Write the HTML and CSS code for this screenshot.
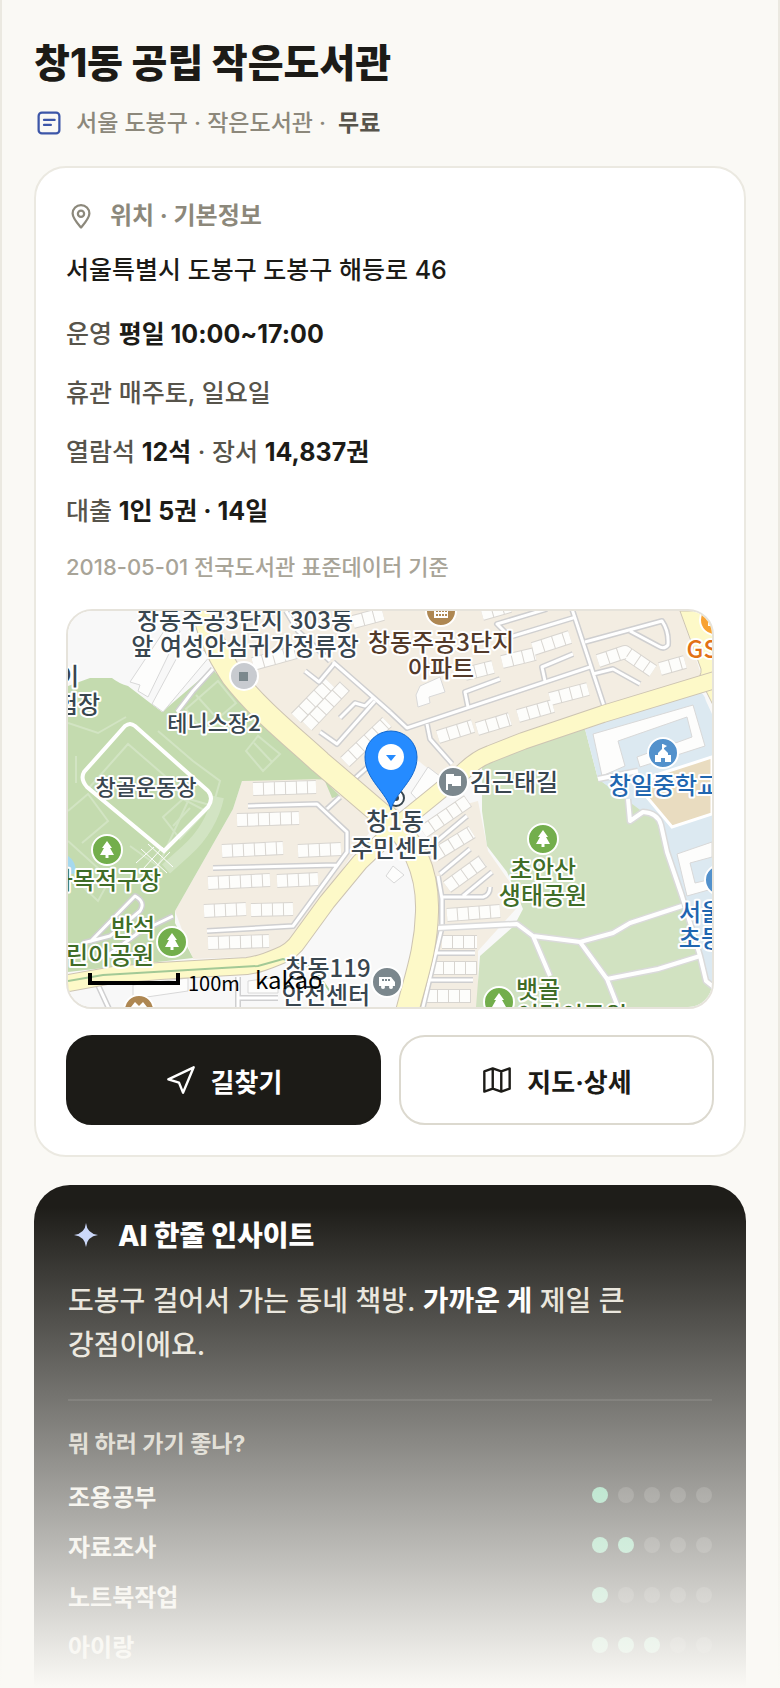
FILE: index.html
```
<!DOCTYPE html>
<html lang="ko">

<head>
    <meta charset="UTF-8">
    <meta name="viewport" content="width=device-width, initial-scale=1.0">
    <title>창1동 공립 작은도서관</title>
    <link rel="stylesheet" href="styles.css">
</head>

<body>
    <main class="page">
        <header class="place-header">
            <h1 class="title">창1동 공립 작은도서관</h1>
            <p class="meta">
                <svg class="icon icon-doc" viewBox="0 0 24 24" aria-hidden="true">
                    <rect x="3.7" y="3.7" width="16.6" height="16.6" rx="2.6" />
                    <path d="M8 9.5h8.5M8 13.5h5.5" />
                </svg>
                <span>서울 도봉구 · 작은도서관 ·</span>
                <strong class="free">무료</strong>
            </p>
        </header>

        <section class="card">
            <h2 class="card-title">
                <svg class="icon" viewBox="0 0 24 24" aria-hidden="true">
                    <path d="M12 21.2c-3.6-4.2-6.7-7.6-6.7-11.2a6.7 6.7 0 0 1 13.4 0c0 3.6-3.1 7-6.7 11.2z" />
                    <circle cx="12" cy="10.2" r="2.5" />
                </svg>
                <span>위치 · 기본정보</span>
            </h2>
            <p class="address">서울특별시 도봉구 도봉구 해등로 46</p>
            <ul class="info">
                <li>운영 <b>평일 10:00~17:00</b></li>
                <li>휴관 매주토, 일요일</li>
                <li>열람석 <b>12석</b> · 장서 <b>14,837권</b></li>
                <li>대출 <b>1인 5권 · 14일</b></li>
            </ul>
            <p class="source">2018-05-01 전국도서관 표준데이터 기준</p>

            <div class="map">
                <svg class="map-canvas" viewBox="0 0 644 396" preserveAspectRatio="xMidYMid slice" role="img" aria-label="창1동 주민센터 주변 지도">
                    <defs>
                        <g id="roads">
                            <path d="M322 101L339 117L522 56M265 51L322 101M504-2L537 98M517 31L594 10Q601 20 600 34Q596 39 590 35L562 20M525 63L545 58L572 73" />
                            <path d="M508 6L442 26L429 13L479 -2M477 70L474 56L505 43M400 96L397 81L432 68M359 113L362 128L384 153" />
                            <path d="M237 60L251 71L266 53M272 107L287 92L297 95L305 87M252 121L269 133L307 90M284 170L322 136M218 0L230 20L262 50" />
                            <path d="M180 195L249 193L279 221V241L225 315L139 320M145 257L269 254M259 198L272 186M145 58L125 80L109 101" />
                            <path d="M22 331L67 285Q78 291 72 300L42 325L15 332M105 305L70 322L35 348" />
                            <path d="M370 265L374 288V316L355 396M374 286L415 286Q422 284 422 276M372 263L402 238M368 231L399 205M395 285L424 261M365 342H407M359 369H405" />
                            <path d="M30 374L42 400M170 366V400M170 387H210" />
                        </g>
                        <g id="paths">
                            <path d="M369 317L449 313L465 325L512 331L545 322L562 312L614 295M465 325L482 365M512 331L539 368L550 396M539 368L590 358L632 345" />
                            <path d="M560 188L562 210L575 201Q590 202 593 214L599 241L614 285L632 345L638 370L648 378M530 168L570 160" />
                        </g>
                        <g id="houses">
                            <path d="M185 53L239 38M239 115L277 75M277 151L319 111M285 11L315 3M228 107L262 72" />
                            <path d="M434 51L467 43M465 38L502 26M370 126L405 115M409 118L442 108M450 105L485 95M482 88L520 78M397 63L425 56M530 50L557 41L585 60M592 58L617 51M414 3L442 -5" />
                            <path d="M185 178L248 176M169 209L231 207M154 240L215 237M230 240L273 238M140 272L202 269M209 270L250 268M136 300L178 298M183 299L225 298M140 332L201 330" />
                            <path d="M355 221L400 190M365 245L404 221M379 276L415 250M379 304L432 300M374 331H409M365 357H409M359 385H403" />
                        </g>
                        <g id="highways">
                            <path d="M133 -10C140 20 146 38 165 66C190 98 220 122 252 151L335 222" />
                            <path d="M318 205C352 235 360 270 359 301C358 340 348 365 338 405" />
                            <path class="side-road" d="M320 222L362 188L395 161Q408 148 422 143L455 130L535 103L650 68" />
                            <path class="side-road" d="M330 215L292 251L259 291L232 328Q224 341 209 346Q190 354 179 355L92 360L45 364L-5 373" />
                        </g>
                        <g id="tree">
                            <circle class="poi-ring" r="15" />
                            <path class="poi-glyph" d="M0-9L5-2H3L7 5H1.5V8H-1.5V5H-7L-3-2H-5Z" />
                        </g>
                    </defs>

                    <rect class="land" width="644" height="396" />

                    <!-- land use -->
                    <path class="estate" d="M134 0H612L634 66L535 103L395 155L372 200L410 190L420 240L455 290L410 340V396H350L370 310L345 225L305 195L165 60Z" />
                    <path class="estate" d="M165 198L174 170L252 165L272 175L308 213L280 250L222 338L199 345L125 348L107 300Z" />
                    <path class="land" d="M315 170L342 143L400 190L350 235Z" />
                    <path class="forest" d="M0 75L22 67H44Q50 72 60 75L94 101L144 58L185 98L272 185L264 187L256 168L174 170L165 198L107 300L107 312L125 347L0 361Z" />
                    <path class="park" d="M414 200V151L439 140L517 118L530 168L560 188L575 201L592 208L612 285L648 392V396H408L412 345L446 315L455 298L439 261L419 235Z" />
                    <path class="school" d="M517 118L628 81Q636 80 638 90L644 103V376L630 345L592 208L575 201L530 168Z" />
                    <path class="playground" d="M644 146L585 165L578 185L604 216L644 203Z" />

                    <!-- trails and courts inside the park -->
                    <path class="trail-wide" d="M150 186C146 205 135 225 118 240L98 258" />
                    <g class="trail">
                        <path d="M0 112L30 122L58 106M8 145V172M62 235L90 255L121 188L145 195L152 170L125 150L90 120M0 230L42 268L30 290L0 262M90 258L75 280" />
                        <path d="M118 98L150 70L168 92L135 120ZM128 84L146 104M178 140L190 125L212 143L195 160ZM186 132L204 151M135 125L152 110" />
                        <path d="M0 200L20 183L40 210L14 232M95 206L115 188L138 200L112 228ZM105 215L122 197M20 178L60 133L112 178" />
                    </g>
                    <path class="track" d="M57 115L16 161Q12 168 19 176L96 240L140 196Q146 187 140 180L67 115Q62 111 57 115Z" />
                    <path class="trail-thin" d="M75 258L95 236M82 262L102 241M68 252L86 236M73 238L99 262M80 233L105 256" />
                    <path class="pond" d="M0 245Q8 250 8 262L0 264Z" />

                    <!-- large buildings -->
                    <g class="building">
                        <path d="M62 71L100 14L112 20L80 86L70 80L72 74ZM84 93L120 26L142 45L95 101Z" />
                        <path d="M348 84L352 75L372 66L377 81L361 86L362 92L350 96ZM343 182L360 156L373 166L354 194Z" />
                        <path d="M525 123L625 94L637 135L572 156L569 146L624 126L619 106L550 130L557 155L534 165Z" />
                        <path d="M644 231L609 243L619 285L644 278V268L627 272L622 252L644 246Z" />
                        <path d="M65 374L120 367V380L65 388ZM180 370L210 366V382H180ZM325 255L336 264L326 272L318 265Z" />
                    </g>

                    <use class="houses-edge" href="#houses" />
                    <use class="houses-fill" href="#houses" />
                    <use class="roads-edge" href="#roads" />
                    <use class="roads-fill" href="#roads" />
                    <use class="paths-edge" href="#paths" />
                    <use class="paths-fill" href="#paths" />
                    <path class="highway-block" d="M612 0L633 58Q634 66 626 70L638 80L646 96V0Z" />
                    <use class="highways-edge" href="#highways" />
                    <use class="highways-fill" href="#highways" />
                    <path class="subway" d="M0 370L35 364L190 355L215 348L245 356L265 385" />

                    <!-- points of interest -->
                    <g transform="translate(176 65)">
                        <circle class="poi-stop" r="14" />
                        <rect class="poi-stop-core" x="-5" y="-4" width="9" height="9" />
                    </g>
                    <g transform="translate(373 0)">
                        <circle class="poi-ring brown" r="15" />
                        <path class="poi-glyph" d="M-7-6H7V7H-7Z" />
                        <path class="poi-dots" d="M-5 0H6M-5 4H6" />
                    </g>
                    <g transform="translate(385 171)">
                        <circle class="poi-ring gray" r="15" />
                        <path class="poi-glyph" d="M-7-8H1V-6H8V4H-1V2H-5V8H-7Z" />
                    </g>
                    <g transform="translate(595 142)">
                        <circle class="poi-ring blue" r="15" />
                        <path class="poi-glyph" d="M0-9L4-7L1-5V-4L5 0V2H8V9H2V5H-2V9H-8V2H-5V0L-1-4V-9Z" />
                    </g>
                    <g transform="translate(319 371)">
                        <circle class="poi-ring gray" r="15" />
                        <path class="poi-glyph" d="M-8-5H4L8 0V4H-8Z" />
                        <path class="poi-dots gray" d="M-5-2H3" />
                        <circle class="poi-glyph" cx="-4" cy="5" r="2" />
                        <circle class="poi-glyph" cx="4" cy="5" r="2" />
                    </g>
                    <circle class="poi-ring blue" cx="652" cy="269" r="15" />
                    <circle class="poi-ring orange" cx="647" cy="9" r="15" />
                    <path class="poi-glyph" d="M640 3H648V15H640Z" />
                    <circle class="poi-ring brown" cx="71" cy="399" r="15" />
                    <path class="poi-glyph" d="M63 396L67 391L71 395L75 391L79 396Z" />
                    <use href="#tree" x="39" y="239" />
                    <use href="#tree" x="104" y="331" />
                    <use href="#tree" x="475" y="228" />
                    <use href="#tree" x="431" y="391" />
                    <circle class="spot" cx="328" cy="187" r="8" />
                    <circle class="spot-core" cx="328" cy="187" r="3" />

                    <!-- labels -->
                    <g class="label">
                        <text x="177" y="18">창동주공3단지 303동</text>
                        <text x="177" y="44">앞 여성안심귀가정류장</text>
                        <text x="0" y="74">이</text>
                        <text x="10" y="102">험장</text>
                        <text class="small" x="146" y="120">테니스장2</text>
                        <text class="small" x="78" y="184">창골운동장</text>
                        <text x="446" y="180">김근태길</text>
                        <text x="327" y="219">창1동</text>
                        <text x="327" y="246">주민센터</text>
                        <text x="260" y="366">창동119</text>
                        <text x="258" y="393">안전센터</text>
                        <text class="brown" x="373" y="40">창동주공3단지</text>
                        <text class="brown" x="373" y="66">아파트</text>
                        <text class="green" x="38" y="278">다목적구장</text>
                        <text class="green" x="65" y="325">반석</text>
                        <text class="green" x="31" y="353">어린이공원</text>
                        <text class="green" x="475" y="267">초안산</text>
                        <text class="green" x="475" y="293">생태공원</text>
                        <text class="green" x="470" y="387">뱃골</text>
                        <text class="green" x="504" y="413">어린이공원</text>
                        <text class="blue" x="596" y="183">창일중학교</text>
                        <text class="blue" x="644" y="310">서울창</text>
                        <text class="blue" x="655" y="336">초등학교</text>
                        <text class="orange" x="648" y="47">GS25</text>
                    </g>

                    <!-- scale bar -->
                    <path class="scale-bar" d="M22 362V372H110V362" />
                    <text class="scale-text" x="120" y="380">100m</text>
                    <text class="brand" x="187" y="378">kakao</text>

                    <!-- marker -->
                    <path class="pin" d="M323 199C319 181 297 169 297 146A26 26 0 0 1 349 146C349 169 327 181 323 199Z" />
                    <circle class="pin-hole" cx="323" cy="146" r="13" />
                    <path class="pin-arrow" d="M318 144H328L323 150Z" />
                </svg>
            </div>

            <div class="actions">
                <button type="button" class="btn btn-dark">
                    <svg class="btn-icon" viewBox="0 0 24 24" aria-hidden="true">
                        <path d="M2.5 11.5L21.5 2.5L13.5 21.5L10.5 14Z" />
                    </svg>
                    <span>길찾기</span>
                </button>
                <button type="button" class="btn">
                    <svg class="btn-icon btn-icon-map" viewBox="0 0 24 24" aria-hidden="true">
                        <path d="M2.5 5.5L8.8 3.3L15.2 5.5L21.5 3.3V18.5L15.2 20.7L8.8 18.5L2.5 20.7ZM8.8 3.3V18.5M15.2 5.5V20.7" />
                    </svg>
                    <span>지도·상세</span>
                </button>
            </div>
        </section>

        <section class="insight">
            <h2 class="insight-title">
                <svg class="spark" viewBox="0 0 36 36" aria-hidden="true">
                    <path d="M18 5Q19 15.5 30 17Q19 18.5 18 29Q17 18.5 6 17Q17 15.5 18 5Z" />
                </svg>
                <span>AI 한줄 인사이트</span>
            </h2>
            <p class="insight-text">도봉구 걸어서 가는 동네 책방. <b>가까운 게</b> 제일 큰 강점이에요.</p>

            <div class="purpose">
                <h3 class="purpose-title">뭐 하러 가기 좋나?</h3>
                <ul class="purpose-list">
                    <li>
                        <span>조용공부</span>
                        <span class="dots"><i class="dot on"></i><i class="dot"></i><i class="dot"></i><i class="dot"></i><i class="dot"></i></span>
                    </li>
                    <li>
                        <span>자료조사</span>
                        <span class="dots"><i class="dot on"></i><i class="dot on"></i><i class="dot"></i><i class="dot"></i><i class="dot"></i></span>
                    </li>
                    <li>
                        <span>노트북작업</span>
                        <span class="dots"><i class="dot on"></i><i class="dot"></i><i class="dot"></i><i class="dot"></i><i class="dot"></i></span>
                    </li>
                    <li>
                        <span>아이랑</span>
                        <span class="dots"><i class="dot on"></i><i class="dot on"></i><i class="dot on"></i><i class="dot"></i><i class="dot"></i></span>
                    </li>
                </ul>
            </div>
        </section>
        <div class="fade"></div>
    </main>
</body>

</html>
```
FILE: styles.css
```
* {
    box-sizing: border-box;
}

body {
    margin: 0;
    font-family: Inter, 'Noto Sans CJK KR', sans-serif;
    font-weight: 500;
    background-color: #faf9f5;
    color: #1c1b17;
}

h1,
h2,
h3,
p,
ul {
    margin: 0;
    padding: 0;
}

ul {
    list-style: none;
}

.page {
    position: relative;
    padding: 36px 32px 0;
    border-left: 2px solid #ebe9e1;
    border-right: 2px solid #ebe9e1;
}

/* header */
.title {
    font-size: 39px;
    line-height: 54px;
    font-weight: 800;
}

.meta {
    display: flex;
    align-items: center;
    gap: 12px;
    margin-top: 15px;
    font-size: 23px;
    line-height: 36px;
    color: #8c887b;
}

.free {
    font-weight: 600;
    color: #57544b;
}

.icon {
    width: 30px;
    height: 30px;
    flex: none;
    fill: none;
    stroke: #8c887b;
    stroke-width: 1.8;
    stroke-linecap: round;
    stroke-linejoin: round;
}

.icon-doc {
    stroke: #3c56a8;
}

/* location card */
.card {
    margin-top: 25px;
    padding: 30px;
    background-color: #fff;
    border: 2px solid #ebe9e1;
    border-radius: 32px;
}

.card-title {
    display: flex;
    align-items: center;
    gap: 14px;
    font-size: 24px;
    line-height: 36px;
    font-weight: 700;
    color: #8c887b;
}

.address {
    margin-top: 16px;
    font-size: 25px;
    line-height: 40px;
}

.info {
    display: grid;
    gap: 20px;
    margin-top: 25px;
    font-size: 25px;
    line-height: 39px;
    color: #57544b;
}

.info b {
    font-weight: 700;
    color: #1c1b17;
}

.source {
    margin-top: 20px;
    font-size: 22px;
    line-height: 32px;
    color: #a8a498;
}

.actions {
    display: grid;
    grid-template-columns: 1fr 1fr;
    gap: 18px;
    margin-top: 26px;
}

.btn {
    display: flex;
    align-items: center;
    justify-content: center;
    gap: 14px;
    height: 90px;
    border: 2px solid #dcd9cf;
    border-radius: 26px;
    background-color: #fff;
    color: #1c1b17;
    font-family: inherit;
    font-size: 26px;
    font-weight: 700;
    cursor: pointer;
}

.btn-dark {
    border-color: #1c1b17;
    background-color: #1c1b17;
    color: #fff;
}

.btn-icon {
    width: 32px;
    height: 32px;
    fill: none;
    stroke: currentColor;
    stroke-width: 1.8;
    stroke-linejoin: round;
}

/* map */
.map {
    height: 400px;
    margin-top: 26px;
    border: 2px solid #e6e3db;
    border-radius: 26px;
    overflow: hidden;
}

.map-canvas {
    display: block;
    width: 100%;
    height: 100%;
}

.land {
    fill: #f8f8f8;
}

.estate {
    fill: #f3ede2;
}

.forest {
    fill: #c4dbaf;
}

.park {
    fill: #d1e2c1;
}

.school {
    fill: #dce9f1;
}

.playground {
    fill: #e9dcc0;
    stroke: #fff;
    stroke-width: 3;
}

.pond {
    fill: #a5d8ee;
}

.building {
    fill: #fdfdfc;
    stroke: #d8d8d8;
    stroke-width: 1;
}

.trail {
    fill: none;
    stroke: #d2e4c3;
    stroke-width: 2;
}

.trail-wide {
    fill: none;
    stroke: #d2e4c3;
    stroke-width: 12;
}

.trail-thin {
    fill: none;
    stroke: #fff;
    stroke-width: 1;
}

.track {
    fill: none;
    stroke: #fff;
    stroke-width: 4;
}

.houses-edge,
.houses-fill,
.roads-edge,
.roads-fill,
.paths-edge,
.paths-fill,
.highways-edge,
.highways-fill {
    fill: none;
    stroke-linejoin: round;
}

.houses-edge {
    stroke: #d8d5d0;
    stroke-width: 14;
}

.houses-fill {
    stroke: #fdfdfb;
    stroke-width: 12;
    stroke-dasharray: 10 1;
}

.roads-edge {
    stroke: #cfcfd0;
    stroke-width: 6;
}

.roads-fill {
    stroke: #fff;
    stroke-width: 3;
}

.paths-edge {
    stroke: #dadada;
    stroke-width: 7;
}

.paths-fill {
    stroke: #fff;
    stroke-width: 4;
}

.highways-edge {
    --side: 18px;
    stroke: #cdc4b2;
    stroke-width: 24;
}

.highways-fill {
    --side: 16px;
    stroke: #fdf9c8;
    stroke-width: 22;
}

.side-road {
    stroke-width: var(--side);
}

.highway-block {
    fill: #fdf9c8;
    stroke: #cdc4b2;
    stroke-width: 1;
}

.subway {
    fill: none;
    stroke: #a3c996;
    stroke-width: 2;
}

.poi-ring {
    fill: #73ae4c;
    stroke: #fff;
    stroke-width: 2;
}

.poi-ring.brown {
    fill: #ae8752;
}

.poi-ring.gray {
    fill: #7b878d;
}

.poi-ring.blue {
    fill: #5291cc;
}

.poi-ring.orange {
    fill: #f8a234;
}

.poi-glyph {
    fill: #fff;
}

.poi-dots {
    stroke: #ae8752;
    stroke-width: 2;
    stroke-dasharray: 2 1;
}

.poi-dots.gray {
    stroke: #7b878d;
}

.poi-stop {
    fill: #c8cbd0;
    stroke: #fff;
    stroke-width: 2;
}

.poi-stop-core {
    fill: #7b888d;
}

.spot {
    fill: #fff;
    stroke: #39464f;
    stroke-width: 2;
}

.spot-core {
    fill: #39464f;
}

.label {
    font-family: 'Noto Sans CJK KR', sans-serif;
    font-size: 24px;
    font-weight: 500;
    text-anchor: middle;
    fill: #39464f;
    stroke: #fff;
    stroke-width: 4;
    stroke-linejoin: round;
    paint-order: stroke;
}

.label .small {
    font-size: 22px;
}

.label .brown {
    fill: #533a2a;
}

.label .green {
    fill: #3f6d27;
}

.label .blue {
    fill: #1f66b0;
}

.label .orange {
    fill: #e27114;
}

.scale-bar {
    fill: none;
    stroke: #000;
    stroke-width: 4;
}

.scale-text {
    font-family: 'Noto Sans CJK KR', sans-serif;
    font-size: 20px;
    font-weight: 400;
}

.brand {
    font-family: 'Noto Sans CJK KR', sans-serif;
    font-size: 24px;
    font-weight: 400;
}

.pin {
    fill: #258bff;
    stroke: #1168cf;
    stroke-width: 1;
}

.pin-hole {
    fill: #fff;
}

.pin-arrow {
    fill: #258bff;
}

/* insight card */
.insight {
    margin-top: 28px;
    padding: 32px 34px 17px;
    border-radius: 36px 36px 0 0;
    background-color: #1e1d19;
}

.insight-title {
    display: flex;
    align-items: center;
    gap: 14px;
    font-size: 28px;
    line-height: 38px;
    font-weight: 800;
    color: #fff;
}

.spark {
    width: 36px;
    height: 36px;
    fill: #c9d6fa;
}

.insight-text {
    margin-top: 24px;
    font-size: 28px;
    line-height: 44px;
    color: #e6e2d8;
    word-break: keep-all;
}

.insight-text b {
    color: #fff;
}

.purpose {
    margin-top: 32px;
    padding-top: 28px;
    border-top: 2px solid #34332f;
}

.purpose-title {
    font-size: 23px;
    line-height: 30px;
    font-weight: 700;
    color: #cbc7bb;
}

.purpose-list {
    margin-top: 11px;
    font-size: 24px;
    font-weight: 600;
    color: #f1eee6;
}

.purpose-list li {
    display: flex;
    align-items: center;
    justify-content: space-between;
    height: 50px;
}

.dots {
    display: flex;
    gap: 10px;
}

.dot {
    width: 16px;
    height: 16px;
    border-radius: 50%;
    background-color: #403f3b;
}

.dot.on {
    background-color: #6fcea0;
}

/* the page dissolves towards the bottom edge */
.fade {
    position: absolute;
    left: -2px;
    right: -2px;
    bottom: 0;
    height: 480px;
    background: linear-gradient(to bottom, rgba(250, 249, 245, 0), #faf9f5);
    pointer-events: none;
}
```
